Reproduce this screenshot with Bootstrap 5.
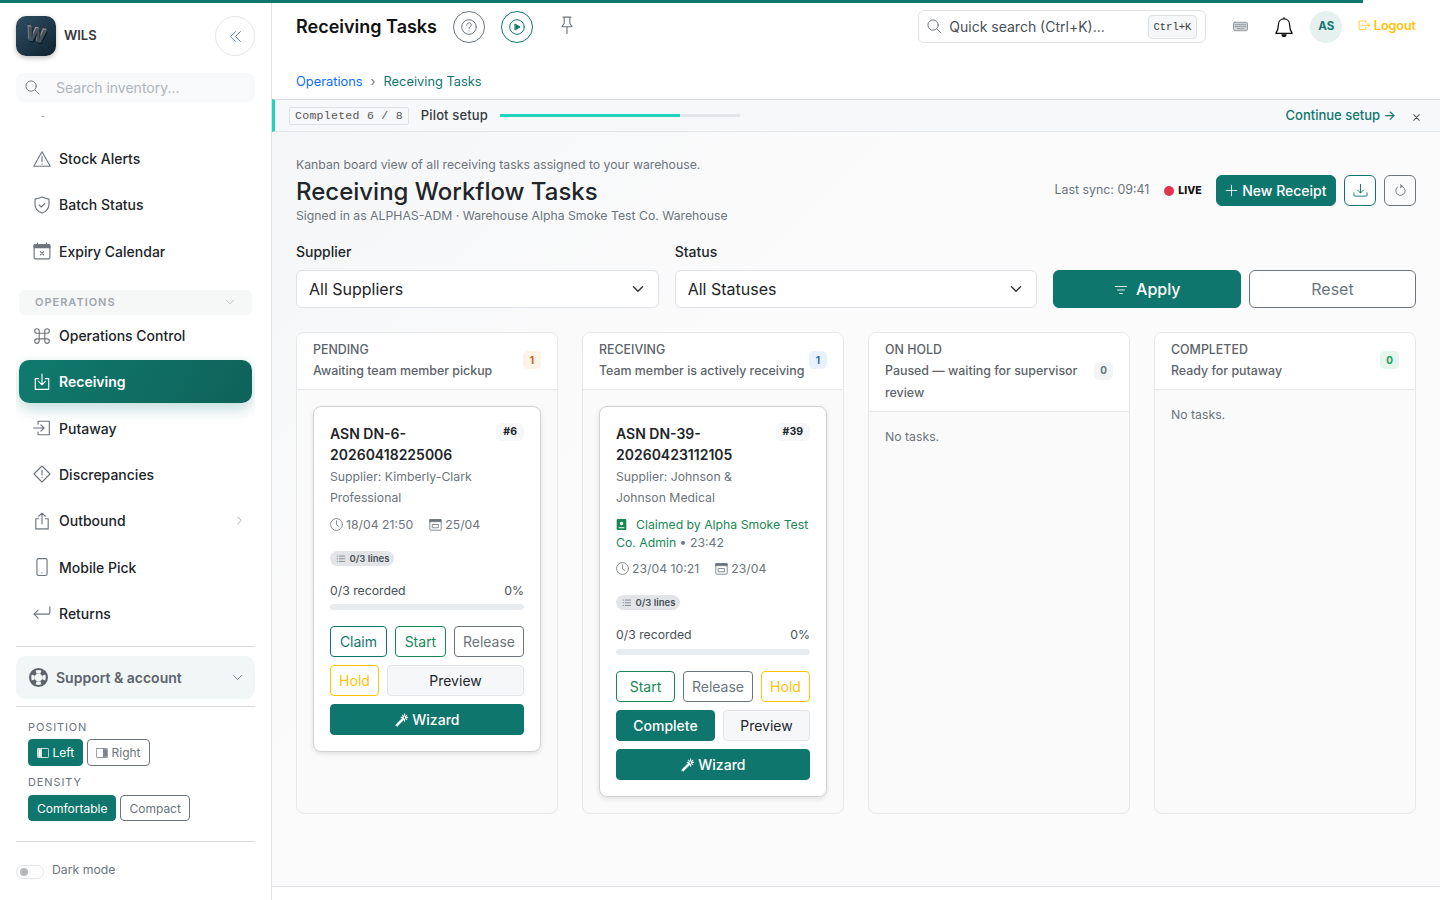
<!DOCTYPE html>
<html lang="en">
<head>
<meta charset="utf-8">
<title>Receiving Tasks</title>
<link href="https://cdn.jsdelivr.net/npm/bootstrap@5.3.0/dist/css/bootstrap.min.css" rel="stylesheet">
<style>
html,body{height:100%;overflow:hidden}
body{font-family:Inter,"Liberation Sans",sans-serif;color:#212529;background:#fff;font-size:14px}
.ic{width:1em;height:1em;fill:none;stroke:currentColor;stroke-width:1;stroke-linecap:round;stroke-linejoin:round;flex:none;display:inline-block;vertical-align:-.125em}
.ic-f{fill:currentColor;stroke:none}
.loadbar{height:3px;width:1363px;background:#0f766e;position:fixed;top:0;left:0;z-index:5}
.shell{height:900px}
.side{width:272px;flex:none;border-right:1px solid #dee2e6;padding:16px 16px 0;background:#fff;height:900px}
.logo{width:40px;height:40px;border-radius:10px;background:linear-gradient(140deg,#2f4f63,#0f2230);box-shadow:0 2px 5px rgba(0,0,0,.25)}
.logo span{color:#3f5361;font-weight:800;font-size:19px;text-shadow:1px 1px 0 #0b141a,-1px -1px 0 #a98f86;transform:rotate(12deg)}
.brand{font-size:13px;font-weight:600;color:#343a40;margin-left:8px}
.collapse-btn{width:40px;height:40px;border:1px solid #e5e7eb;border-radius:50%;background:#fff;color:#2f5f95;font-size:13px;padding:0}
.side-search{height:29px;margin-top:17px;background:#f8f9fa;border-radius:8px;color:#adb5bd;font-size:14px;padding-left:9px}
.side-search .ic{color:#6c757d;font-size:15px;margin-right:16px}
.sidenav{height:534px;margin-top:10px;overflow:hidden}
.dash{height:15px;padding-left:25px;color:#777;line-height:1;font-size:8px}
.nav-row{height:43.3px;margin:0 3px 3px;padding-left:14px;border-radius:10px;color:#212529;font-weight:500;font-size:14px;text-decoration:none;gap:8px}
.nav-row>.ic{font-size:18px;color:#6c757d}
.nav-row.on{background:linear-gradient(120deg,#107a6e,#0e6259);color:#fff;font-weight:600;box-shadow:0 6px 14px rgba(15,118,110,.25)}
.nav-row.on>.ic{color:#fff}
.grp{height:25px;margin:17px 3px -1px;padding:0 17px 0 16px;background:#f6f8f8;border-radius:6px;color:#a0a6ad;font-size:11px;font-weight:600;letter-spacing:.09em}
.sep{border-top:1px solid #d5d7da;height:0}
.support{height:43px;margin:9px 0 7px;background:#f1f6f7;border-radius:10px;padding:0 12px 0 13px;color:#5c636a;font-weight:600;font-size:14px}
.cap{font-size:11px;letter-spacing:.08em;color:#6c757d;line-height:13px}
.prefs{padding:14px 12px 0}
.mini{font-size:12px;padding:0 8px;height:27px;line-height:25px;border-radius:4px}
.mini.dn{height:26px}
.switchy{width:28px;height:14px;border:1px solid #e3e5e8;border-radius:8px;background:#fff;padding:2px 3px}
.switchy i{display:block;width:8px;height:8px;border-radius:50%;background:#b5b8bb}
.main-col{min-width:0}
.topbar{height:99px;background:#fff;padding:0 24px}
.tb-row{height:53px}
.page-t{font-size:18px;font-weight:600;color:#111;margin:0 16px 0 0}
.circ{width:32px;height:32px;border-radius:50%;border:1px solid #6c757d;background:#fff;padding:0;color:#6c757d;font-size:16px;margin-right:16px}
.circ.tl{border-color:#0f766e;color:#0f766e}
.qs{width:288px;height:33px;border:1px solid #dee2e6;border-radius:6px;color:#495057;padding:0 8px;font-size:14px;margin-left:auto}
.qs .ic{font-size:15px;margin-right:7px;color:#6c757d}
.kbd-tag{font-family:"Liberation Mono",monospace;font-size:10.5px;background:#f6f7f9;border:1px solid #dee2e6;border-radius:4px;padding:3px 5px;margin-left:auto;line-height:16px;color:#343a40}
.avatar{width:32px;height:32px;border-radius:50%;background:#e6f0ee;color:#0f766e;font-size:11.5px;font-weight:700}
.logout{color:#ffc107;font-weight:600;font-size:12.5px}
.crumbs{font-size:12.85px;margin-top:19px}
.crumbs a{color:#0d6efd;text-decoration:none}
.crumbs b{font-weight:400;color:#0f766e}
.crumbs span{color:#6c757d;margin:0 8px}
.setup{height:33px;background:#f7f8fa;border-top:1px solid #d8dadd;border-bottom:1px solid #e2e4e7;border-left:3px solid #21d4bd;padding:0 19px 0 14px;font-size:13px}
.tag-m{font-family:"Liberation Mono",monospace;font-size:11.5px;border:1px solid #dee2e6;color:#555;padding:0 5px;line-height:16px;letter-spacing:.025em;margin-right:12px;border-radius:2px}
.pilot{font-weight:500;color:#343a40;margin-right:12px;letter-spacing:.01em}
.track{width:240px;height:3px;background:#e3e5e8}
.track i{display:block;height:100%;width:75%;background:#21d4bd}
.cont{color:#0f766e;font-weight:500;margin-left:auto;margin-right:16px}
.body-area{height:755px;background:linear-gradient(135deg,#f5f6f7,#fbfbfc 35%);padding:24px 24px 0;border-bottom:1px solid #dee2e6}
.foot{height:13px;background:#fff}
.lead-s{font-size:12.25px;color:#6c757d;line-height:18px}
.h-big{font-size:24px;font-weight:500;color:#212529;line-height:33px;margin:1px 0 -1px}
.sync{font-size:12.4px;color:#6c757d;margin-right:15px}
.live{font-size:10.5px;font-weight:800;color:#111;margin-right:14px}
.live i{display:inline-block;width:10px;height:10px;border-radius:50%;background:#e2344f;margin-right:4px}
.btn-teal{--bs-btn-bg:#0f766e;--bs-btn-border-color:#0f766e;--bs-btn-color:#fff;--bs-btn-hover-bg:#0f766e;--bs-btn-hover-color:#fff;--bs-btn-hover-border-color:#0f766e}
.btn-ol-teal{--bs-btn-bg:#fff;--bs-btn-border-color:#0f766e;--bs-btn-color:#0f766e}
.act-m{height:31px;font-size:14px;font-weight:500;padding:0 8.5px;line-height:1}
.sq{width:32px;height:31px;padding:0;font-size:15px;margin-left:8px}
.act-wrap{height:31px;margin-top:19px}
.lbl{font-size:14px;font-weight:500;margin-bottom:9px;line-height:18px;color:#212529}
.form-select.sel{height:38px;border-color:#dee2e6;color:#212529;font-size:16px;padding-left:12px}
.f-row{margin-top:2px;margin-bottom:24px}
.f-btn{height:38px;font-size:16px;padding:0;font-weight:500}
.f-reset{--bs-btn-color:#6c757d;--bs-btn-border-color:#6c757d;--bs-btn-bg:#fff;font-weight:400}
.kan{display:grid;grid-template-columns:repeat(4,1fr);gap:24px;align-items:stretch}
.kcol{height:482px;background:#fafafa;border:1px solid #e7e8ea;border-radius:8px;overflow:hidden}
.khead{background:#fff;border-bottom:1px solid #e5e7eb;padding:6px 16px 7.5px;font-size:12.4px;font-weight:500;color:#5c636a;line-height:21.5px;gap:4px}
.khead .ttl{line-height:21px}
.cnt{min-width:18px;height:18px;border-radius:5px;font-size:10px;font-weight:700;padding:0 6px;flex:none}
.c-o{background:#fdf3e7;color:#b5651d}.c-b{background:#e8f1fc;color:#2f6fb5}.c-g{background:#f3f4f5;color:#6c757d}.c-s{background:#e6f6ec;color:#1e9e5a}
.kbody{padding:16px}
.none{font-size:12.25px;color:#6c757d;line-height:18px}
.tcard{background:#fff;border:1px solid #cfd2d5;border-radius:8px;padding:16px;box-shadow:0 2px 5px rgba(0,0,0,.1)}
.tname{font-size:14px;font-weight:600;line-height:21px;color:#212529}
.idtag{background:#f6f7f9;border-radius:6px;font-size:10.5px;font-weight:700;padding:0 7px;height:18px;line-height:18px;flex:none;color:#212529}
.sup{font-size:12.25px;color:#6c757d;line-height:21px;margin-top:1px}
.claim{font-size:12.25px;line-height:18px;color:#198754;margin-top:8px;margin-bottom:8px}
.claim em{font-style:normal;color:#6c757d}
.meta{font-size:12.25px;color:#6c757d;line-height:18px;margin-top:8px;gap:16px}
.meta .ic{font-size:13px;margin-right:3px;vertical-align:-2px}
.pill{display:inline-block;background:#e2e4e7;border-radius:8px;font-size:9.5px;font-weight:600;color:#495057;padding:0 5px 0 6px;line-height:15px;margin-top:17px}
.rec{font-size:12.25px;color:#495057;line-height:18px;margin-top:15px}
.bar-s{height:6px;background:#e9ecef;border-radius:3px;margin-top:4px;margin-bottom:16px}
.tcard.claimed .bar-s{margin-top:5px}
.acts{display:flex;flex-wrap:wrap;gap:8px}
.acts .btn{flex:1 1 auto;font-size:14px;height:31px;padding:0 8px;line-height:29px;border-radius:4px}
.acts .fix-start{flex:0 0 51px}
.acts .fix-rel{flex:0 0 70px}
.acts .hold-f{flex:0 0 49px}
.b-prev{--bs-btn-bg:#f6f7f9;--bs-btn-border-color:#e2e4e7;--bs-btn-color:#212529}
.acts .w-full{flex-basis:100%;font-weight:500}
.acts .b-comp{font-weight:500}
</style>
</head>
<body>
<svg width="0" height="0" class="position-absolute">
<defs>
<symbol id="i-search" viewBox="0 0 16 16"><circle cx="6.5" cy="6.5" r="5.5"/><path d="M10.6 10.6l4.4 4.4"/></symbol>
<symbol id="i-warn" viewBox="0 0 16 16"><path d="M8 1.6L15.3 14.4H.7z"/><path d="M8 6v4.3"/><path d="M8 12.2v.3"/></symbol>
<symbol id="i-shield" viewBox="0 0 16 16"><path d="M8 .8c-1.900 1-4 1.600-6.200 2v4.700c0 3.500 2.600 6.300 6.200 7.700 3.600-1.400 6.200-4.200 6.200-7.700V2.800C12 2.400 9.900 1.800 8 .8z"/><path d="M5.500 8l1.800 1.800 3.300-3.300"/></symbol>
<symbol id="i-calx" viewBox="0 0 16 16"><rect x="1" y="2.500" width="14" height="12.500" rx="1"/><path d="M1 2.500h14v2.500H1z" fill="currentColor"/><path d="M4 1v1.500M12 1v1.500"/><path d="M6.500 8.500l3 3M9.500 8.500l-3 3"/></symbol>
<symbol id="i-cmd" viewBox="0 0 16 16"><path d="M5.500 5.500h5v5h-5zM5.500 5.500V3.500a2 2 0 1 0-2 2zM10.500 5.500V3.500a2 2 0 1 1 2 2zM5.500 10.500v2a2 2 0 1 1-2-2zM10.500 10.500v2a2 2 0 1 0 2-2z"/></symbol>
<symbol id="i-in" viewBox="0 0 16 16"><path d="M5 5H2v9.500h12V5H11"/><path d="M8 1v9.500M5 7.500l3 3 3-3"/></symbol>
<symbol id="i-put" viewBox="0 0 16 16"><path d="M4.500 4.500V2h10v12h-10v-2.500"/><path d="M.5 8h9M7 5.200L9.800 8 7 10.800"/></symbol>
<symbol id="i-dia" viewBox="0 0 16 16"><path d="M8 .9L15.100 8 8 15.100.9 8z"/><path d="M8 4.800v4"/><path d="M8 11v.3"/></symbol>
<symbol id="i-out" viewBox="0 0 16 16"><path d="M5 6H2.500v9h11V6H11"/><path d="M8 10.500V1M5 3.800L8 1l3 2.800"/></symbol>
<symbol id="i-phone" viewBox="0 0 16 16"><rect x="3.500" y=".5" width="9" height="15" rx="1.500"/><path d="M8 13v.2"/></symbol>
<symbol id="i-ret" viewBox="0 0 16 16"><path d="M15 2.500v5c0 1-.8 1.500-1.500 1.500H1"/><path d="M4.500 5.500L1 9l3.500 3.500"/></symbol>
<symbol id="i-chev-d" viewBox="0 0 16 16"><path d="M2 5l6 6 6-6"/></symbol>
<symbol id="i-chev-r" viewBox="0 0 16 16"><path d="M5 2l6 6-6 6"/></symbol>
<symbol id="i-dbl" viewBox="0 0 16 16"><path d="M8 2L2 8l6 6M14 2L8 8l6 6"/></symbol>
<symbol id="i-life" viewBox="0 0 16 16"><path class="ic-f" fill-rule="evenodd" stroke="none" fill="currentColor" d="M8 0a8 8 0 1 1 0 16A8 8 0 0 1 8 0zm0 4.800a3.200 3.200 0 1 0 0 6.400 3.200 3.200 0 0 0 0-6.400zM5.500 2.300l1 2.600a3.600 3.600 0 0 1 3 0l1-2.600a6.300 6.300 0 0 0-5 0zm5 11.400l-1-2.600a3.600 3.600 0 0 1-3 0l-1 2.600a6.300 6.300 0 0 0 5 0zM2.300 5.500a6.300 6.300 0 0 0 0 5l2.600-1a3.600 3.600 0 0 1 0-3zm11.400 5a6.300 6.300 0 0 0 0-5l-2.600 1a3.600 3.600 0 0 1 0 3z"/></symbol>
<symbol id="i-left" viewBox="0 0 16 16"><rect x=".5" y="2" width="15" height="12" rx="1"/><path d="M2 3.500h3v9H2z" fill="currentColor"/><path d="M6 2v12"/></symbol>
<symbol id="i-right" viewBox="0 0 16 16"><rect x=".5" y="2" width="15" height="12" rx="1"/><path d="M11 3.500h3v9h-3z" fill="currentColor"/><path d="M10 2v12"/></symbol>
<symbol id="i-q" viewBox="0 0 16 16"><circle cx="8" cy="8" r="7.300"/><path d="M5.800 6.100c0-1.400 1-2.200 2.300-2.200s2.200.8 2.200 2c0 1.700-2.300 1.700-2.300 3.500"/><path d="M8 11.800v.2"/></symbol>
<symbol id="i-play" viewBox="0 0 16 16"><circle cx="8" cy="8" r="7.300"/><path d="M6.300 5.200L11 8l-4.700 2.800z" fill="currentColor"/></symbol>
<symbol id="i-pin" viewBox="0 0 16 16"><path d="M4.500 1h7M5.500 1v5.500L3.500 9.500h9l-2-3V1M8 9.500V15.500"/></symbol>
<symbol id="i-kb" viewBox="0 0 16 16"><rect x=".5" y="3.500" width="15" height="9" rx="1.500" fill="#ced4da"/><path d="M2.500 6h11M2.500 8h11M4.500 10.200h7" stroke-dasharray="1 1"/></symbol>
<symbol id="i-bell" viewBox="0 0 16 16"><path d="M8 1.500c-2.800 0-4.500 2.200-4.500 4.800 0 3.200-1 5.400-2 6.700h13c-1-1.300-2-3.500-2-6.700 0-2.600-1.700-4.800-4.500-4.800zM8 .5v1"/><path d="M6.300 14.300a1.800 1.800 0 0 0 3.400 0z" fill="currentColor"/></symbol>
<symbol id="i-logout" viewBox="0 0 16 16"><path d="M10 5V2.500H1.500v11H10V11"/><path d="M5 8h10M12.500 5.500L15 8l-2.500 2.500"/></symbol>
<symbol id="i-dl" viewBox="0 0 16 16"><path d="M1 10.500V13a1 1 0 0 0 1 1h12a1 1 0 0 0 1-1v-2.500"/><path d="M8 1.500v9M4.800 7.500L8 10.700l3.200-3.200"/></symbol>
<symbol id="i-ref" viewBox="0 0 16 16"><path d="M9 3.300A5 5 0 1 1 4.500 4.500"/><path d="M8 1.800l2 1.600L8 5" fill="currentColor"/></symbol>
<symbol id="i-filter" viewBox="0 0 16 16"><path d="M1.500 4h13M4 8h8M6.500 12h3"/></symbol>
<symbol id="i-clock" viewBox="0 0 16 16"><circle cx="8" cy="8" r="7.300"/><path d="M8 3.500V8.500l3 2"/></symbol>
<symbol id="i-cal" viewBox="0 0 16 16"><rect x="1" y="2" width="14" height="13" rx="1"/><path d="M1 2h14v2.500H1z" fill="currentColor"/><path d="M4.500 8h7v4h-7z"/></symbol>
<symbol id="i-list" viewBox="0 0 16 16"><path d="M5.500 3.500h9M5.500 8h9M5.500 12.500h9M2 3.500h.5M2 8h.5M2 12.500h.5"/></symbol>
<symbol id="i-wand" viewBox="0 0 16 16"><path d="M1 15L9 7l1.500 1.500-8 8z" fill="currentColor" transform="translate(0 -1.500)"/><path d="M11 1v2.500M11 7v2.500M14.500 5H12M9.500 5H7M13.500 2.500L12 4M8.500 2.500L10 4M13.500 7.500L12 6" stroke-width="1.200"/></symbol>
<symbol id="i-badge" viewBox="0 0 16 16"><path class="ic-f" stroke="none" fill="currentColor" d="M2.500 0h11A1.500 1.500 0 0 1 15 1.500v13a1.500 1.500 0 0 1-1.500 1.500h-11A1.500 1.500 0 0 1 1 14.500v-13A1.500 1.500 0 0 1 2.500 0zM8 4a2.500 2.500 0 1 0 0 5 2.500 2.500 0 0 0 0-5zM4 12v1.500h8V12z"/></symbol>
<symbol id="i-plus" viewBox="0 0 16 16"><path d="M8 1.500v13M1.500 8h13"/></symbol>
<symbol id="i-x" viewBox="0 0 16 16"><path d="M3 3l10 10M13 3L3 13" stroke-width="1.800"/></symbol>
</defs>
</svg>
<div class="loadbar"></div>
<div class="d-flex shell">
  <aside class="side d-flex flex-column">
    <div class="d-flex align-items-center">
      <div class="logo d-flex align-items-center justify-content-center"><span>W</span></div>
      <span class="brand">WILS</span>
      <button class="btn collapse-btn ms-auto d-flex align-items-center justify-content-center"><svg class="ic"><use href="#i-dbl"/></svg></button>
    </div>
    <div class="side-search d-flex align-items-center"><svg class="ic"><use href="#i-search"/></svg>Search inventory...</div>
    <nav class="sidenav">
      <div class="dash">-</div>
      <div style="height:10px"></div>
      <a class="nav-row d-flex align-items-center"><svg class="ic"><use href="#i-warn"/></svg>Stock Alerts</a>
      <a class="nav-row d-flex align-items-center"><svg class="ic"><use href="#i-shield"/></svg>Batch Status</a>
      <a class="nav-row d-flex align-items-center"><svg class="ic"><use href="#i-calx"/></svg>Expiry Calendar</a>
      <div class="grp d-flex align-items-center justify-content-between"><span>OPERATIONS</span><svg class="ic" style="font-size:10px"><use href="#i-chev-d"/></svg></div>
      <a class="nav-row d-flex align-items-center"><svg class="ic"><use href="#i-cmd"/></svg>Operations Control</a>
      <a class="nav-row on d-flex align-items-center"><svg class="ic"><use href="#i-in"/></svg>Receiving</a>
      <a class="nav-row d-flex align-items-center"><svg class="ic"><use href="#i-put"/></svg>Putaway</a>
      <a class="nav-row d-flex align-items-center"><svg class="ic"><use href="#i-dia"/></svg>Discrepancies</a>
      <a class="nav-row d-flex align-items-center"><svg class="ic"><use href="#i-out"/></svg>Outbound<svg class="ic ms-auto me-2 text-secondary" style="font-size:9px"><use href="#i-chev-r"/></svg></a>
      <a class="nav-row d-flex align-items-center"><svg class="ic"><use href="#i-phone"/></svg>Mobile Pick</a>
      <a class="nav-row d-flex align-items-center"><svg class="ic"><use href="#i-ret"/></svg>Returns</a>
    </nav>
    <div class="sep"></div>
    <div class="support d-flex align-items-center"><svg class="ic me-2" style="font-size:19px"><use href="#i-life"/></svg>Support &amp; account<svg class="ic ms-auto" style="font-size:11px"><use href="#i-chev-d"/></svg></div>
    <div class="sep"></div>
    <div class="prefs">
      <div class="cap" style="margin-bottom:5px">POSITION</div>
      <div class="d-flex" style="gap:4px">
        <button class="btn btn-teal mini"><svg class="ic"><use href="#i-left"/></svg> Left</button>
        <button class="btn btn-outline-secondary mini"><svg class="ic"><use href="#i-right"/></svg> Right</button>
      </div>
      <div class="cap" style="margin-top:10px;margin-bottom:6px">DENSITY</div>
      <div class="d-flex" style="gap:4px">
        <button class="btn btn-teal mini dn">Comfortable</button>
        <button class="btn btn-outline-secondary mini dn">Compact</button>
      </div>
    </div>
    <div class="sep" style="margin-top:20px"></div>
    <div class="d-flex align-items-center" style="margin-top:23px;gap:8px">
      <div class="switchy"><i></i></div><span style="font-size:12.25px;color:#6c757d;line-height:16px;margin-top:-5px">Dark mode</span>
    </div>
  </aside>
  <div class="main-col flex-grow-1 d-flex flex-column">
    <header class="topbar">
      <div class="tb-row d-flex align-items-center">
        <h1 class="page-t">Receiving Tasks</h1>
        <button class="btn circ d-flex align-items-center justify-content-center"><svg class="ic"><use href="#i-q"/></svg></button>
        <button class="btn circ tl d-flex align-items-center justify-content-center"><svg class="ic"><use href="#i-play"/></svg></button>
        <svg class="ic" style="font-size:18px;color:#6c757d;margin-top:-3px;margin-left:9px"><use href="#i-pin"/></svg>
        <div class="qs d-flex align-items-center"><svg class="ic"><use href="#i-search"/></svg>Quick search (Ctrl+K)...<span class="kbd-tag">Ctrl+K</span></div>
        <svg class="ic" style="font-size:15px;color:#8f969c;margin-left:27px"><use href="#i-kb"/></svg>
        <svg class="ic" style="font-size:20px;color:#111;margin-left:26px"><use href="#i-bell"/></svg>
        <div class="avatar d-flex align-items-center justify-content-center" style="margin-left:16px">AS</div>
        <div class="logout" style="margin-left:16px"><svg class="ic" style="margin-right:3px"><use href="#i-logout"/></svg>Logout</div>
      </div>
      <div class="crumbs"><a href="#">Operations</a><span>›</span><b>Receiving Tasks</b></div>
    </header>
    <div class="setup d-flex align-items-center">
      <span class="tag-m">Completed 6 / 8</span>
      <span class="pilot">Pilot setup</span>
      <div class="track"><i></i></div>
      <span class="cont">Continue setup →</span>
      <svg class="ic" style="font-size:9px;color:#555;margin-top:3px"><use href="#i-x"/></svg>
    </div>
    <main class="body-area">
      <div class="d-flex">
        <div>
          <div class="lead-s">Kanban board view of all receiving tasks assigned to your warehouse.</div>
          <h2 class="h-big">Receiving Workflow Tasks</h2>
          <div class="lead-s">Signed in as ALPHAS-ADM · Warehouse Alpha Smoke Test Co. Warehouse</div>
        </div>
        <div class="ms-auto d-flex align-items-center act-wrap">
          <span class="sync">Last sync: 09:41</span>
          <span class="live d-flex align-items-center"><i></i>LIVE</span>
          <button class="btn btn-teal act-m d-flex align-items-center"><svg class="ic me-1" style="font-size:13px"><use href="#i-plus"/></svg>New Receipt</button>
          <button class="btn btn-ol-teal sq d-flex align-items-center justify-content-center"><svg class="ic"><use href="#i-dl"/></svg></button>
          <button class="btn btn-outline-secondary sq d-flex align-items-center justify-content-center"><svg class="ic"><use href="#i-ref"/></svg></button>
        </div>
      </div>
      <div class="row g-3 f-row">
        <div class="col-4"><div class="lbl">Supplier</div><select class="form-select sel"><option>All Suppliers</option></select></div>
        <div class="col-4"><div class="lbl">Status</div><select class="form-select sel"><option>All Statuses</option></select></div>
        <div class="col-4 d-flex align-items-end gap-2">
          <button class="btn btn-teal f-btn" style="flex:188 1 0"><svg class="ic me-1" style="font-size:14px"><use href="#i-filter"/></svg> Apply</button>
          <button class="btn f-btn f-reset" style="flex:167 1 0">Reset</button>
        </div>
      </div>
      <div class="kan">
        <section class="kcol">
          <div class="khead d-flex align-items-center justify-content-between"><div><div class="ttl">PENDING</div><div>Awaiting team member pickup</div></div><span class="cnt c-o d-flex align-items-center justify-content-center">1</span></div>
          <div class="kbody">
            <div class="tcard">
              <div class="d-flex justify-content-between gap-2"><div class="tname">ASN DN-6-<br>20260418225006</div><span class="idtag">#6</span></div>
              <div class="sup">Supplier: Kimberly-Clark<br>Professional</div>
              <div class="meta d-flex"><span><svg class="ic"><use href="#i-clock"/></svg>18/04 21:50</span><span><svg class="ic"><use href="#i-cal"/></svg>25/04</span></div>
              <div><span class="pill"><svg class="ic me-1"><use href="#i-list"/></svg>0/3 lines</span></div>
              <div class="rec d-flex justify-content-between"><span>0/3 recorded</span><span>0%</span></div>
              <div class="bar-s"></div>
              <div class="acts">
                <button class="btn btn-ol-teal">Claim</button>
                <button class="btn btn-outline-success fix-start">Start</button>
                <button class="btn btn-outline-secondary fix-rel">Release</button>
                <button class="btn btn-outline-warning hold-f">Hold</button>
                <button class="btn b-prev">Preview</button>
                <button class="btn btn-teal w-full"><svg class="ic"><use href="#i-wand"/></svg> Wizard</button>
              </div>
            </div>
          </div>
        </section>
        <section class="kcol">
          <div class="khead d-flex align-items-center justify-content-between"><div><div class="ttl">RECEIVING</div><div>Team member is actively receiving</div></div><span class="cnt c-b d-flex align-items-center justify-content-center">1</span></div>
          <div class="kbody">
            <div class="tcard claimed">
              <div class="d-flex justify-content-between gap-2"><div class="tname">ASN DN-39-<br>20260423112105</div><span class="idtag">#39</span></div>
              <div class="sup">Supplier: Johnson &amp;<br>Johnson Medical</div>
              <div class="claim"><svg class="ic" style="font-size:11px;margin-right:9px"><use href="#i-badge"/></svg>Claimed by Alpha Smoke Test Co. Admin <em>• 23:42</em></div>
              <div class="meta d-flex"><span><svg class="ic"><use href="#i-clock"/></svg>23/04 10:21</span><span><svg class="ic"><use href="#i-cal"/></svg>23/04</span></div>
              <div><span class="pill"><svg class="ic me-1"><use href="#i-list"/></svg>0/3 lines</span></div>
              <div class="rec d-flex justify-content-between"><span>0/3 recorded</span><span>0%</span></div>
              <div class="bar-s"></div>
              <div class="acts">
                <button class="btn btn-outline-success">Start</button>
                <button class="btn btn-outline-secondary fix-rel">Release</button>
                <button class="btn btn-outline-warning hold-f">Hold</button>
                <button class="btn btn-teal b-comp">Complete</button>
                <button class="btn b-prev">Preview</button>
                <button class="btn btn-teal w-full"><svg class="ic"><use href="#i-wand"/></svg> Wizard</button>
              </div>
            </div>
          </div>
        </section>
        <section class="kcol">
          <div class="khead d-flex align-items-center justify-content-between"><div><div class="ttl">ON HOLD</div><div>Paused — waiting for supervisor review</div></div><span class="cnt c-g d-flex align-items-center justify-content-center">0</span></div>
          <div class="kbody"><div class="none">No tasks.</div></div>
        </section>
        <section class="kcol">
          <div class="khead d-flex align-items-center justify-content-between"><div><div class="ttl">COMPLETED</div><div>Ready for putaway</div></div><span class="cnt c-s d-flex align-items-center justify-content-center">0</span></div>
          <div class="kbody"><div class="none">No tasks.</div></div>
        </section>
      </div>
    </main>
    <div class="foot"></div>
  </div>
</div>
<script src="https://cdn.jsdelivr.net/npm/bootstrap@5.3.0/dist/js/bootstrap.bundle.min.js"></script>
</body>
</html>
